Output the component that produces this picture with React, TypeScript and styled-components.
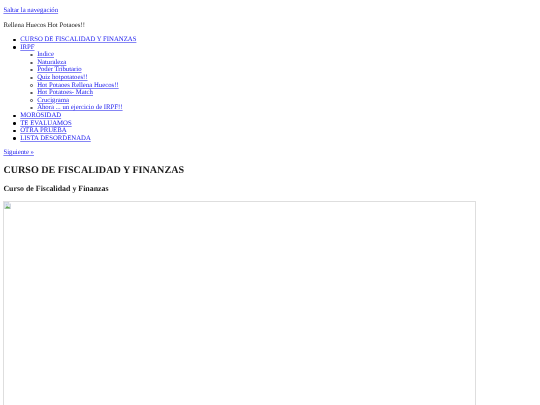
import React from "react";
import styled, { createGlobalStyle } from "styled-components";

const Global = createGlobalStyle`
  html, body { background: #fff; }
  body {
    margin: 0;
    overflow: hidden;
  }
`;

const Page = styled.div`
  padding: 0.6px 3.375px 0;
  font-family: "Liberation Serif", "Times New Roman", serif;
  font-size: 6.75px;
  line-height: 7.594px;
  color: #1c1c1c;
  text-rendering: geometricPrecision;
  filter: blur(0.32px);
`;

const Paragraph = styled.p`
  margin: 6.75px 0;
`;

const TextLink = styled.a`
  color: #1a1aee;
  text-decoration: underline;
  text-decoration-thickness: 0.5px;
  text-decoration-color: #8585f5;
`;

const Menu = styled.ul<{ $nested?: boolean }>`
  margin: ${(p) => (p.$nested ? "0" : "6.75px 0")};
  padding-left: 16.875px;
  list-style: none;
`;

const MenuItem = styled.li<{ $nested?: boolean }>`
  position: relative;

  &::before {
    content: "";
    position: absolute;
    box-sizing: border-box;
    top: 2.7px;
    left: -7px;
    width: 2.4px;
    height: 2.4px;
    border-radius: 50%;
    background: ${(p) => (p.$nested ? "transparent" : "#000")};
    border: ${(p) => (p.$nested ? "0.6px solid #555" : "none")};
  }
`;

const Title = styled.h2`
  margin: 8.4px 0;
  font-size: 10.125px;
  line-height: 11.4px;
  font-weight: 700;
`;

const Subtitle = styled.h3`
  margin: 8.4px 0 7.6px;
  font-size: 7.9px;
  line-height: 8.9px;
  font-weight: 700;
`;

const ImageFrame = styled.div`
  width: 472.5px;
  height: 330px;
  box-sizing: border-box;
  border: 1px solid #dedede;
`;

const BrokenIcon = styled.svg`
  display: block;
  width: 7px;
  height: 7px;
`;

const lessons = [
  "Indice",
  "Naturaleza",
  "Poder Tributario",
  "Quiz hotpotatoes!!",
  "Hot Potaoes Rellena Huecos!!",
  "Hot Potatoes- Match",
  "Crucigrama",
  "Ahora ... un ejercicio de IRPF!!",
];

export default function App() {
  return (
    <Page>
      <Global />
      <Paragraph>
        <TextLink href="#contenido">Saltar la navegación</TextLink>
      </Paragraph>
      <Paragraph>Rellena Huecos Hot Potaoes!!</Paragraph>
      <nav>
        <Menu>
          <MenuItem>
            <TextLink href="#curso">CURSO DE FISCALIDAD Y FINANZAS</TextLink>
          </MenuItem>
          <MenuItem>
            <TextLink href="#irpf">IRPF</TextLink>
            <Menu $nested>
              {lessons.map((lesson) => (
                <MenuItem $nested key={lesson}>
                  <TextLink href="#leccion">{lesson}</TextLink>
                </MenuItem>
              ))}
            </Menu>
          </MenuItem>
          <MenuItem>
            <TextLink href="#morosidad">MOROSIDAD</TextLink>
          </MenuItem>
          <MenuItem>
            <TextLink href="#evaluamos">TE EVALUAMOS</TextLink>
          </MenuItem>
          <MenuItem>
            <TextLink href="#prueba">OTRA PRUEBA</TextLink>
          </MenuItem>
          <MenuItem>
            <TextLink href="#lista">LISTA DESORDENADA</TextLink>
          </MenuItem>
        </Menu>
      </nav>
      <Paragraph>
        <TextLink href="#siguiente">Siguiente »</TextLink>
      </Paragraph>
      <main id="contenido">
        <Title>CURSO DE FISCALIDAD Y FINANZAS</Title>
        <Subtitle>Curso de Fiscalidad y Finanzas</Subtitle>
        <ImageFrame>
          <BrokenIcon viewBox="0 0 16 16" role="img" aria-label="imagen rota">
            <path d="M1 0h9l5 5v11H1z" fill="#dfe5ee" stroke="#a9b4c4" />
            <path d="M10 0v5h5" fill="#fff" stroke="#a9b4c4" />
            <path d="M2 15l5-6 3 3 2-2 2 5z" fill="#5fa84e" />
            <circle cx="6" cy="6" r="2" fill="#b9cce6" />
          </BrokenIcon>
        </ImageFrame>
      </main>
    </Page>
  );
}
